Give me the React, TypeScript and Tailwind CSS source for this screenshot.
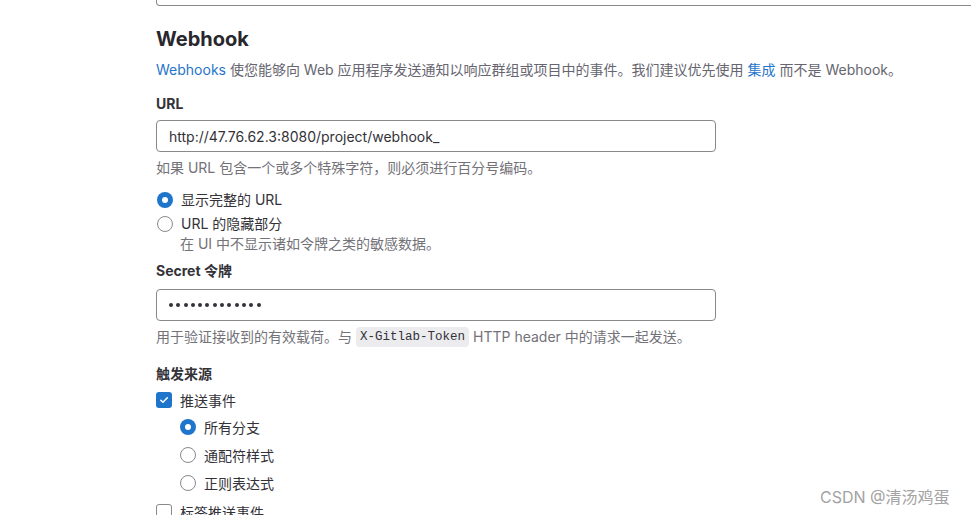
import React from "react";

const font = { fontFamily: 'Inter, "Noto Sans CJK SC", sans-serif' };

function Radio({ checked }: { checked?: boolean }) {
  return checked ? (
    <span className="flex h-4 w-4 shrink-0 items-center justify-center rounded-full bg-[#1f75cb]">
      <span className="h-[6px] w-[6px] rounded-full bg-white" />
    </span>
  ) : (
    <span className="h-4 w-4 shrink-0 rounded-full border border-[#89888d] bg-white" />
  );
}

function Checkbox({ checked }: { checked?: boolean }) {
  return checked ? (
    <span className="flex h-4 w-4 shrink-0 items-center justify-center rounded-[3px] bg-[#1f75cb]">
      <svg width="10" height="10" viewBox="0 0 10 10" fill="none">
        <path d="M1.8 5.2 4 7.3 8.3 2.8" stroke="white" strokeWidth="1.5" strokeLinecap="round" strokeLinejoin="round" />
      </svg>
    </span>
  ) : (
    <span className="h-4 w-4 shrink-0 rounded-[3px] border border-[#89888d] bg-white" />
  );
}

export default function App() {
  return (
    <div
      className="relative h-[515px] w-[971px] overflow-hidden bg-white pl-[156px] text-[14px] text-[#333238]"
      style={font}
    >
      <div className="h-[6px] w-[900px] rounded-b-[4px] border-x border-b border-[#89888d]" />

      <h2 className="mt-[21px] text-[20px] font-bold leading-[24px] text-[#28272d]">Webhook</h2>

      <p className="mt-[9px] leading-[20px] text-[#666570]">
        <span className="text-[#1f75cb]">Webhooks</span> 使您能够向 Web 应用程序发送通知以响应群组或项目中的事件。我们建议优先使用{" "}
        <span className="text-[#1f75cb]">集成</span> 而不是 Webhook。
      </p>

      <div className="mt-[14px] font-bold leading-[20px]">URL</div>
      <div className="mt-[6px] flex h-[32px] w-[560px] items-center rounded-[4px] border border-[#89888d] px-[12px] text-[#333238]">
        http://47.76.62.3:8080/project/webhook_
      </div>
      <p className="mt-[6px] leading-[20px] text-[#737278]">如果 URL 包含一个或多个特殊字符，则必须进行百分号编码。</p>

      <div className="mt-[12px] flex h-[20px] items-center gap-[8px]">
        <span className="ml-[1px] flex"><Radio checked /></span>
        <span className="leading-[20px]">显示完整的 URL</span>
      </div>
      <div className="mt-[4px] flex h-[20px] items-center gap-[8px]">
        <span className="ml-[1px] flex"><Radio /></span>
        <span className="leading-[20px]">URL 的隐藏部分</span>
      </div>
      <p className="ml-[24px] leading-[20px] text-[#737278]">在 UI 中不显示诸如令牌之类的敏感数据。</p>

      <div className="mt-[7px] font-bold leading-[20px]">Secret 令牌</div>
      <div className="mt-[8px] flex h-[32px] w-[560px] items-center rounded-[4px] border border-[#89888d] px-[12px]">
        <span className="flex gap-[3.3px]">
          {Array.from({ length: 13 }).map((_, i) => (
            <span key={i} className="h-[4px] w-[4px] rounded-full bg-[#333238]" />
          ))}
        </span>
      </div>
      <p className="mt-[6px] flex h-[20px] items-center leading-[20px] text-[#737278]">
        用于验证接收到的有效载荷。与
        <code
          className="mx-[4px] rounded-[4px] bg-[#ececef] px-[4px] text-[12.5px] leading-[20px] text-[#333238]"
          style={{ fontFamily: '"Liberation Mono", "DejaVu Sans Mono", monospace' }}
        >
          X-Gitlab-Token
        </code>
        HTTP header 中的请求一起发送。
      </p>

      <div className="mt-[17px] font-bold leading-[20px]">触发来源</div>
      <div className="mt-[6px] flex h-[20px] items-center gap-[8px]">
        <Checkbox checked />
        <span>推送事件</span>
      </div>
      <div className="ml-[24px]">
        <div className="mt-[7px] flex h-[20px] items-center gap-[8px]">
          <Radio checked />
          <span>所有分支</span>
        </div>
        <div className="mt-[8px] flex h-[20px] items-center gap-[8px]">
          <Radio />
          <span>通配符样式</span>
        </div>
        <div className="mt-[8px] flex h-[20px] items-center gap-[8px]">
          <Radio />
          <span>正则表达式</span>
        </div>
      </div>
      <div className="mt-[9px] flex h-[20px] items-center gap-[8px]">
        <Checkbox />
        <span>标签推送事件</span>
      </div>

      <div className="absolute left-[820px] top-[485px] text-[16px] leading-[24px] text-[#a3a3a3]">CSDN @清汤鸡蛋</div>
    </div>
  );
}
